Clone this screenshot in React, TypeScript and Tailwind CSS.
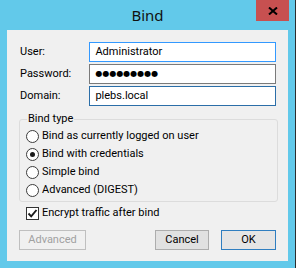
import { useState } from "react";

const font = "font-['Roboto','Noto_Sans',sans-serif]";

function Radio({ checked }: { checked?: boolean }) {
  return (
    <span className="flex h-[13px] w-[13px] items-center justify-center rounded-full border border-[#3c3c3c] bg-white">
      {checked && <span className="h-[5px] w-[5px] rounded-full bg-[#1a1a1a]" />}
    </span>
  );
}

function CheckBox({ checked }: { checked?: boolean }) {
  return (
    <span className="flex h-[13px] w-[13px] items-center justify-center border border-[#333333] bg-white">
      {checked && (
        <svg viewBox="0 0 11 11" className="h-[11px] w-[11px]">
          <path d="M1.5 5.5 L4.2 8.3 L9.5 2" fill="none" stroke="#1a1a1a" strokeWidth="1.9" />
        </svg>
      )}
    </span>
  );
}

export default function App() {
  const [bindType, setBindType] = useState("credentials");
  const [encrypt, setEncrypt] = useState(true);

  const options = [
    { id: "current", label: "Bind as currently logged on user" },
    { id: "credentials", label: "Bind with credentials" },
    { id: "simple", label: "Simple bind" },
    { id: "digest", label: "Advanced (DIGEST)" },
  ];

  const fields = [
    { label: "User:", value: "Administrator", border: "border-[#3399ff]" },
    { label: "Password:", value: "●●●●●●●●●", border: "border-[#7a7a7a]", secret: true },
    { label: "Domain:", value: "plebs.local", border: "border-[#2b6ea8]" },
  ];

  return (
    <div className={`flex h-[268px] w-[296px] flex-col border-r border-[#2d2d2d] bg-[#62c9ea] ${font} text-black`}>
      <div className="relative flex h-[30px] items-center justify-center">
        <span className="font-['Noto_Sans',sans-serif] text-[15px] leading-none text-[#111]">Bind</span>
        <div className="absolute right-[6px] top-0 flex h-[21px] w-[33px] items-center justify-center bg-[#c75050]">
          <svg viewBox="0 0 10 8" className="h-[8px] w-[10px]">
            <path d="M1 0.5 L9 7.5 M9 0.5 L1 7.5" stroke="#000" strokeWidth="2" />
          </svg>
        </div>
      </div>

      <div className="mx-[7px] flex h-[231px] flex-col bg-[#f0f0f0] px-[12px] pt-[12px] text-[11px]">
        <div className="flex flex-col gap-[2px]">
          {fields.map((f) => (
            <div key={f.label} className="flex h-5 items-center">
              <span className="ml-px w-[70px]">{f.label}</span>
              <div className={`flex h-5 w-[188px] items-center border bg-white px-[5px] ${f.border}`}>
                <span className={f.secret ? "font-['DejaVu_Sans',sans-serif] text-[8px]" : ""}>{f.value}</span>
              </div>
            </div>
          ))}
        </div>

        <fieldset className="mt-[5px] w-[259px] rounded-[3px] border border-[#dcdcdc] px-[6px] pb-[2px]">
          <legend className="ml-px px-px leading-4">Bind type</legend>
          {options.map((o) => (
            <div key={o.id} className="flex h-[18px] items-center gap-[3px]" onClick={() => setBindType(o.id)}>
              <Radio checked={bindType === o.id} />
              <span>{o.label}</span>
            </div>
          ))}
        </fieldset>

        <div className="ml-[7px] mt-[3px] flex h-4 items-center gap-[3px]" onClick={() => setEncrypt(!encrypt)}>
          <CheckBox checked={encrypt} />
          <span>Encrypt traffic after bind</span>
        </div>

        <div className="mt-[9px] flex h-5 items-stretch">
          <button type="button" disabled className="w-[67px] border border-[#bfbfbf] bg-[#f0f0f0] text-[#a0a0a0]">
            Advanced
          </button>
          <button type="button" className="ml-[69px] w-[54px] border border-[#adadad] bg-[#e1e1e1]">
            Cancel
          </button>
          <button type="button" className="ml-[12px] w-[55px] border border-[#2f7ec0] bg-[#e5e5e5]">
            OK
          </button>
        </div>
      </div>
    </div>
  );
}
